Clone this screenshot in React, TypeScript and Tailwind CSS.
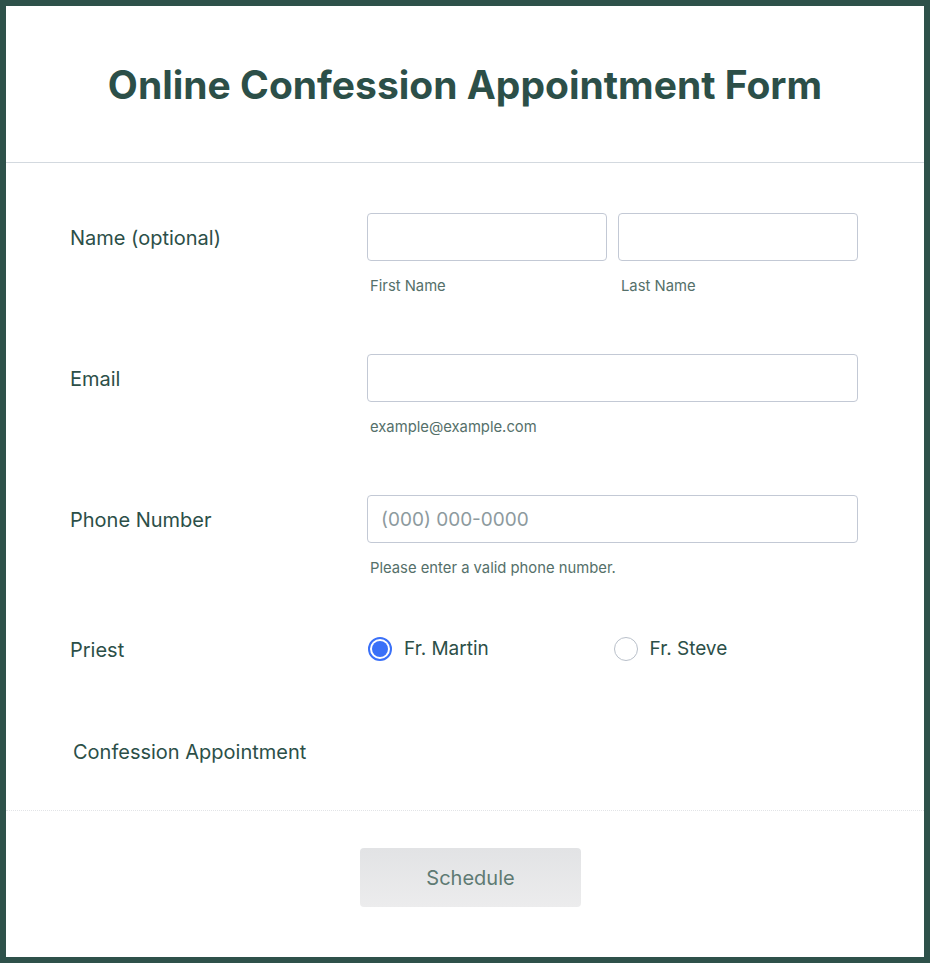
import React, { useState } from "react";

const FONT = { fontFamily: "Inter, 'Noto Sans', sans-serif" };

function Row({ label, children, labelClass = "" }: { label: string; children: React.ReactNode; labelClass?: string }) {
  return (
    <div className="flex">
      <div className={`w-[361px] shrink-0 pl-[64px] h-12 flex items-center pt-px text-[20px] text-[#2c4f48] ${labelClass}`}>
        {label}
      </div>
      <div className="flex-1">{children}</div>
    </div>
  );
}

function Field({ sub, placeholder }: { sub: string; placeholder?: string }) {
  return (
    <div className="flex-1">
      <input
        placeholder={placeholder}
        className="w-full h-12 rounded-[4px] border border-[#c3c9d5] bg-white px-[13px] text-[19px] text-[#2c4f48] placeholder:text-[#8d9a9e] outline-none"
      />
      <div className="mt-[15px] pl-[3px] text-[14.8px] leading-5 text-[#55706a]">{sub}</div>
    </div>
  );
}

function Radio({ checked, label, onClick }: { checked: boolean; label: string; onClick: () => void }) {
  return (
    <button type="button" onClick={onClick} className="flex items-center gap-3 h-12 pl-px">
      {checked ? (
        <span className="w-6 h-6 rounded-full border-2 border-[#3a70f8] flex items-center justify-center bg-white">
          <span className="w-[16px] h-[16px] rounded-full bg-[#3a70f8]" />
        </span>
      ) : (
        <span className="w-6 h-6 rounded-full border border-[#b9c0ca] bg-white" />
      )}
      <span className="text-[19px] text-[#2c4f48]">{label}</span>
    </button>
  );
}

export default function App() {
  const [priest, setPriest] = useState("martin");

  return (
    <div style={FONT} className="w-[930px] h-[963px] border-[6px] border-[#2e514a] bg-white flex flex-col">
      <div className="h-[157px] flex items-center justify-center pt-px border-b border-[#d3d9df]">
        <h1 className="text-[39px] font-bold text-[#2c4f48] leading-none">
          Online Confession Appointment Form
        </h1>
      </div>

      <div className="pt-[50px] pr-[66px]">
        <Row label="Name (optional)">
          <div className="flex gap-[11px]">
            <Field sub="First Name" />
            <Field sub="Last Name" />
          </div>
        </Row>
        <div className="h-[58px]" />
        <Row label="Email">
          <Field sub="example@example.com" />
        </Row>
        <div className="h-[58px]" />
        <Row label="Phone Number">
          <Field sub="Please enter a valid phone number." placeholder="(000) 000-0000" />
        </Row>
        <div className="h-[47px]" />
        <Row label="Priest">
          <div className="grid grid-cols-2">
            <Radio checked={priest === "martin"} label="Fr. Martin" onClick={() => setPriest("martin")} />
            <Radio checked={priest === "steve"} label="Fr. Steve" onClick={() => setPriest("steve")} />
          </div>
        </Row>
        <div className="h-[54px]" />
        <Row label="Confession Appointment" labelClass="pl-[67px]">
          <div />
        </Row>
      </div>

      <div className="mt-[35px] border-t border-dotted border-[#e2e4e7]" />

      <div className="flex justify-center pt-[37px]">
        <button
          type="button"
          className="ml-[11px] w-[221px] h-[59px] rounded-[4px] bg-gradient-to-b from-[#e2e3e5] to-[#ececed] text-[20px] text-[#5e7a73]"
        >
          Schedule
        </button>
      </div>
    </div>
  );
}
